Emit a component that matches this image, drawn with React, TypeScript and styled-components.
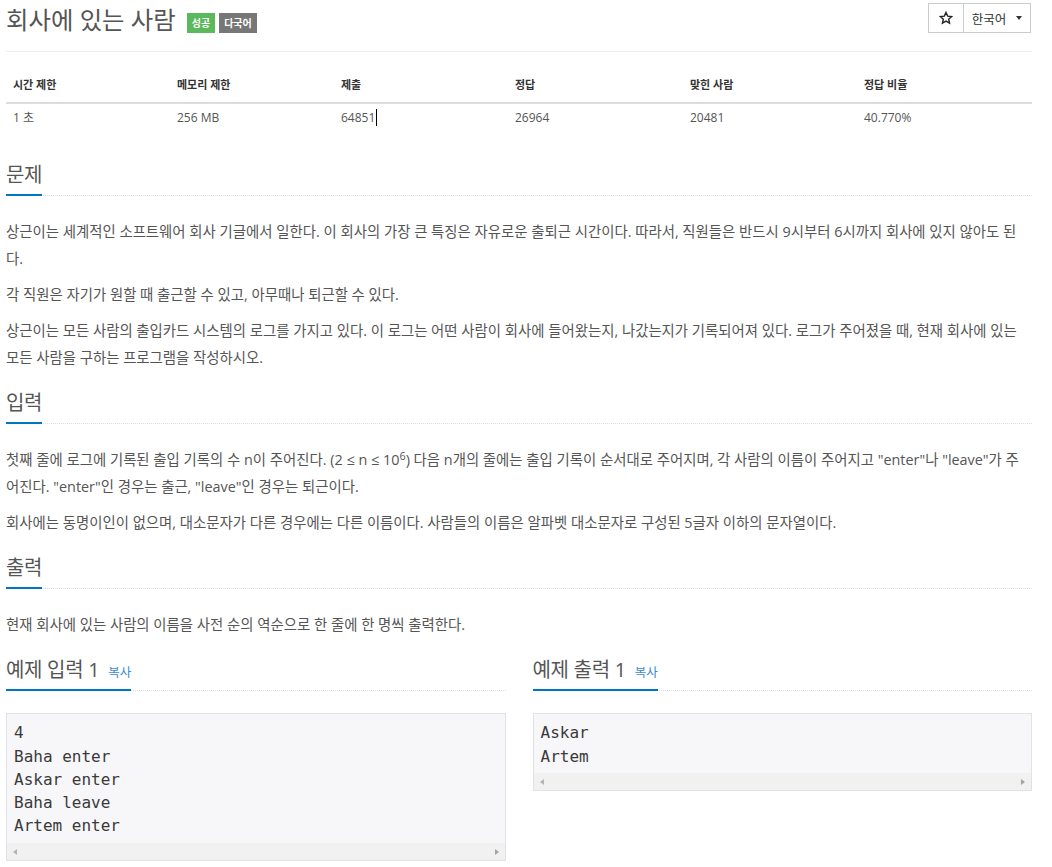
import React from 'react';
import styled, { createGlobalStyle } from 'styled-components';

const GlobalStyle = createGlobalStyle`
  html, body { margin: 0; padding: 0; background: #fff; }
  body {
    font-family: "Open Sans", "Noto Sans CJK KR", sans-serif;
    color: #555;
  }
`;

const Page = styled.div`
  width: 1026px;
  margin-left: 6px;
`;

const Header = styled.div`
  display: flex;
  justify-content: space-between;
  align-items: flex-start;
  height: 51px;
  border-bottom: 1px solid #eee;
`;

const Title = styled.h1`
  margin: 0;
  display: flex;
  align-items: flex-start;
  font-weight: 400;
`;

const TitleText = styled.span`
  font-size: 24.4px;
  line-height: 40px;
  color: #555;
`;

const Badge = styled.span<{ $tone: 'success' | 'default'; $gap: number }>`
  margin-top: 13px;
  margin-left: ${(p) => p.$gap}px;
  height: 20px;
  line-height: 20px;
  padding: 0 5px;
  font-size: 10px;
  font-weight: 700;
  color: #fff;
  background: ${(p) => (p.$tone === 'success' ? '#5cb85c' : '#777')};
`;

const ButtonGroup = styled.div`
  display: flex;
  margin-top: 3px;
  margin-right: 1px;
`;

const GroupButton = styled.button<{ $width: number; $joined?: boolean }>`
  display: flex;
  align-items: center;
  justify-content: center;
  gap: 10px;
  box-sizing: border-box;
  width: ${(p) => p.$width}px;
  height: 30px;
  margin-left: ${(p) => (p.$joined ? '-1px' : '0')};
  padding: 0;
  background: #fff;
  border: 1px solid #ccc;
  font-family: "Open Sans", "Noto Sans CJK KR", sans-serif;
  font-size: 12.5px;
  color: #333;
  cursor: pointer;
`;

const Caret = styled.span`
  width: 0;
  height: 0;
  border-top: 4px solid #333;
  border-left: 3.5px solid transparent;
  border-right: 3.5px solid transparent;
`;

const StatsTable = styled.table`
  width: 100%;
  border-collapse: collapse;
  table-layout: fixed;
  margin-top: 16px;
`;

const Th = styled.th`
  text-align: left;
  padding: 8px 7px;
  line-height: 18px;
  font-size: 11px;
  font-weight: 700;
  color: #333;
  border-bottom: 2px solid #ddd;
`;

const Td = styled.td`
  padding: 5px 7px;
  line-height: 18px;
  font-size: 12px;
  color: #555;
`;

const TextCaret = styled.span`
  display: inline-block;
  width: 1px;
  height: 17px;
  margin-left: 1px;
  background: #000;
  vertical-align: -4px;
`;

const Headline = styled.div<{ $top: number }>`
  margin: ${(p) => p.$top}px 0 22px;
  border-bottom: 1px dotted #ddd;
`;

const HeadlineTitle = styled.h2`
  display: inline-block;
  margin: 0 0 -1px;
  padding-bottom: 7px;
  border-bottom: 2px solid #0076c0;
  font-size: 20px;
  letter-spacing: -0.3px;
  line-height: 24px;
  font-weight: 400;
  color: #555;
`;

const CopyLink = styled.a`
  margin-left: 9px;
  font-size: 12.5px;
  line-height: 1;
  letter-spacing: 0;
  color: #3b8ad3;
  text-decoration: none;
  cursor: pointer;
`;

const Paragraph = styled.p`
  margin: 0 0 9px;
  font-size: 14.4px;
  line-height: 27px;
  color: #555;
`;

const Sup = styled.sup`
  position: relative;
  top: -0.5em;
  font-size: 75%;
  line-height: 0;
  vertical-align: baseline;
`;

const SampleGrid = styled.div`
  display: grid;
  grid-template-columns: 1fr 1fr;
  column-gap: 27px;
  margin-top: 20px;
`;

const SampleColumn = styled.div`
  display: flex;
  flex-direction: column;
`;

const SampleBox = styled.div`
  border: 1px solid #e1e1e8;
  background: #f7f7f9;
`;

const SamplePre = styled.pre`
  margin: 0;
  padding: 7.4px 7px 5.6px;
  font-family: "DejaVu Sans Mono", monospace;
  font-size: 16px;
  line-height: 23.2px;
  color: #3a3a3a;
`;

const ScrollTrack = styled.div`
  height: 17px;
  background: #f1f1f1;
  display: flex;
  justify-content: space-between;
  align-items: center;
  padding: 0 6px;
`;

const ScrollArrow = styled.span<{ $dir: 'left' | 'right' }>`
  width: 0;
  height: 0;
  border-top: 3.5px solid transparent;
  border-bottom: 3.5px solid transparent;
  ${(p) =>
    p.$dir === 'left'
      ? 'border-right: 4px solid #b4b4b4;'
      : 'border-left: 4px solid #a3a3a3;'}
`;

const StarIcon = () => (
  <svg width="14" height="14" viewBox="0 0 24 24" aria-hidden="true">
    <polygon
      points="12,2.5 14.9,8.8 21.8,9.5 16.6,14.1 18.1,20.9 12,17.4 5.9,20.9 7.4,14.1 2.2,9.5 9.1,8.8"
      fill="none"
      stroke="#222"
      strokeWidth="2.4"
      strokeLinejoin="miter"
    />
  </svg>
);

const columns = [164, 164, 174, 175, 174, 175];
const heads = ['시간 제한', '메모리 제한', '제출', '정답', '맞힌 사람', '정답 비율'];

type Sample = { title: string; lines: string[] };
const samples: Sample[] = [
  { title: '예제 입력 1', lines: ['4', 'Baha enter', 'Askar enter', 'Baha leave', 'Artem enter'] },
  { title: '예제 출력 1', lines: ['Askar', 'Artem'] },
];

export default function App() {
  return (
    <>
      <GlobalStyle />
      <Page>
        <Header>
          <Title>
            <TitleText>회사에 있는 사람</TitleText>
            <Badge $tone="success" $gap={11}>성공</Badge>
            <Badge $tone="default" $gap={4}>다국어</Badge>
          </Title>
          <ButtonGroup>
            <GroupButton $width={36}>
              <StarIcon />
            </GroupButton>
            <GroupButton $width={68} $joined>
              한국어 <Caret />
            </GroupButton>
          </ButtonGroup>
        </Header>

        <StatsTable>
          <colgroup>
            {columns.map((w, i) => (
              <col key={i} style={{ width: w }} />
            ))}
          </colgroup>
          <thead>
            <tr>
              {heads.map((h) => (
                <Th key={h}>{h}</Th>
              ))}
            </tr>
          </thead>
          <tbody>
            <tr>
              <Td>1 초</Td>
              <Td>256 MB</Td>
              <Td>
                64851
                <TextCaret />
              </Td>
              <Td>26964</Td>
              <Td>20481</Td>
              <Td>40.770%</Td>
            </tr>
          </tbody>
        </StatsTable>

        <section>
          <Headline $top={31}>
            <HeadlineTitle>문제</HeadlineTitle>
          </Headline>
          <Paragraph>
            상근이는 세계적인 소프트웨어 회사 기글에서 일한다. 이 회사의 가장 큰 특징은 자유로운 출퇴근 시간이다. 따라서, 직원들은 반드시 9시부터 6시까지 회사에 있지 않아도 된다.
          </Paragraph>
          <Paragraph>각 직원은 자기가 원할 때 출근할 수 있고, 아무때나 퇴근할 수 있다.</Paragraph>
          <Paragraph>
            상근이는 모든 사람의 출입카드 시스템의 로그를 가지고 있다. 이 로그는 어떤 사람이 회사에 들어왔는지, 나갔는지가 기록되어져 있다. 로그가 주어졌을 때, 현재 회사에 있는 모든 사람을 구하는 프로그램을 작성하시오.
          </Paragraph>
        </section>

        <section>
          <Headline $top={20}>
            <HeadlineTitle>입력</HeadlineTitle>
          </Headline>
          <Paragraph>
            첫째 줄에 로그에 기록된 출입 기록의 수 n이 주어진다. (2 ≤ n ≤ 10<Sup>6</Sup>) 다음 n개의 줄에는 출입 기록이 순서대로 주어지며, 각 사람의 이름이 주어지고 "enter"나 "leave"가 주어진다. "enter"인 경우는 출근, "leave"인 경우는 퇴근이다.
          </Paragraph>
          <Paragraph>
            회사에는 동명이인이 없으며, 대소문자가 다른 경우에는 다른 이름이다. 사람들의 이름은 알파벳 대소문자로 구성된 5글자 이하의 문자열이다.
          </Paragraph>
        </section>

        <section>
          <Headline $top={20}>
            <HeadlineTitle>출력</HeadlineTitle>
          </Headline>
          <Paragraph>현재 회사에 있는 사람의 이름을 사전 순의 역순으로 한 줄에 한 명씩 출력한다.</Paragraph>
        </section>

        <SampleGrid>
          {samples.map((s) => (
            <SampleColumn key={s.title}>
              <Headline $top={0}>
                <HeadlineTitle>
                  {s.title}
                  <CopyLink>복사</CopyLink>
                </HeadlineTitle>
              </Headline>
              <SampleBox>
                <SamplePre>{s.lines.join('\n')}</SamplePre>
                <ScrollTrack>
                  <ScrollArrow $dir="left" />
                  <ScrollArrow $dir="right" />
                </ScrollTrack>
              </SampleBox>
            </SampleColumn>
          ))}
        </SampleGrid>
      </Page>
    </>
  );
}
